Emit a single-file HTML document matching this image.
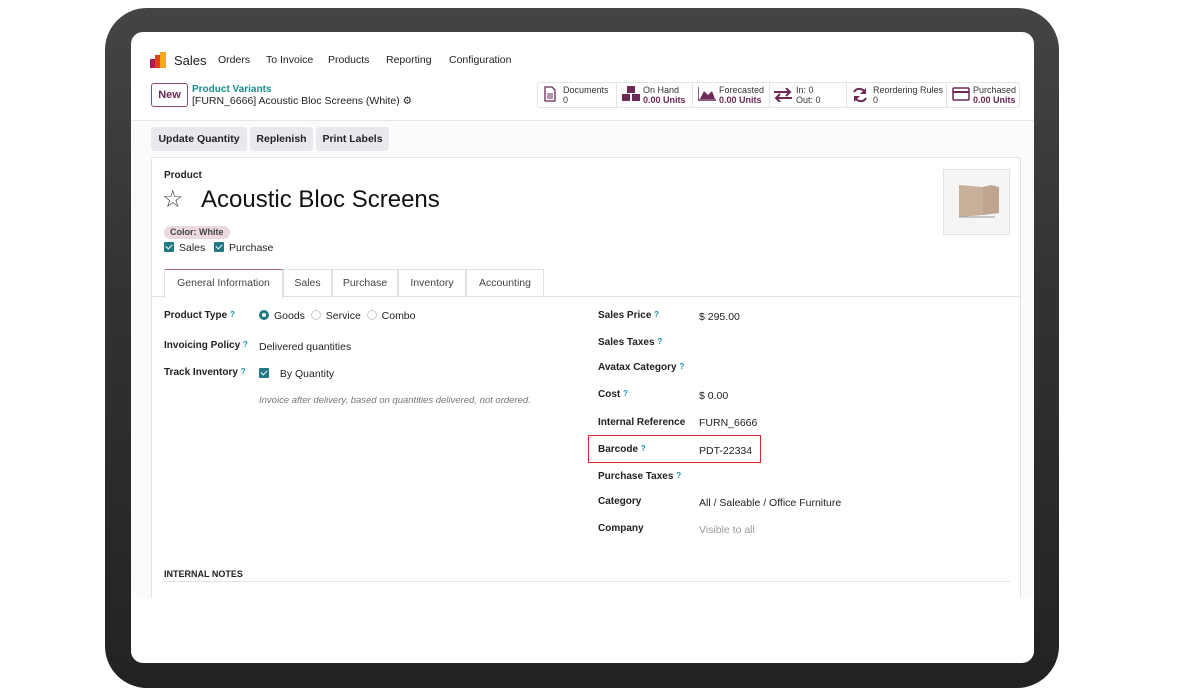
<!DOCTYPE html>
<html><head><meta charset="utf-8"><style>
*{margin:0;padding:0;box-sizing:border-box}
body{width:1200px;height:697px;background:#fff;position:relative;overflow:hidden;font-family:"Liberation Sans",sans-serif;color:#222;font-size:10.5px}
.a{position:absolute;white-space:nowrap}
.b{font-weight:bold}
.q{color:#1a8fb0;font-size:8px;vertical-align:top;font-weight:bold}
.lbl{font-weight:bold;font-size:10px}
.btn{position:absolute;top:127px;height:24px;background:#e7e9ed;border-radius:3px;font-weight:bold;font-size:10.5px;line-height:24px;text-align:center;color:#222;white-space:nowrap}
.stat{position:absolute;top:82px;height:26px;border-right:1px solid #e3e3e3;font-size:9px;line-height:10px;padding:3px 0 0 26px;color:#333;white-space:nowrap}
.stat b{color:#6c2a55}
.tab{position:absolute;top:269px;height:28px;border:1px solid #dee2e6;border-bottom:none;line-height:27px;text-align:center;font-size:10.5px;color:#444}
.cb{display:inline-block;width:10px;height:10px;background:#1f7a83;border-radius:1px;vertical-align:-1px;margin-right:5px;position:relative}
.cb:after{content:"";position:absolute;left:3px;top:1px;width:3px;height:5px;border:solid #fff;border-width:0 1.3px 1.3px 0;transform:rotate(45deg)}
.rad{display:inline-block;width:10px;height:10px;border:1px solid #ccc;border-radius:50%;vertical-align:-1px;margin-right:5px}
</style></head><body>
<div class="a" style="left:105px;top:8px;width:954px;height:680px;border-radius:42px;background:linear-gradient(#444 0%,#333 40%,#222 100%)"></div>
<div class="a" style="left:131px;top:32px;width:903px;height:631px;border-radius:12px;background:#fff"></div>
<div class="a" style="left:131px;top:120px;width:903px;height:478px;background:#fbfbfc"></div>
<div class="a" style="left:131px;top:120px;width:903px;height:1px;background:#e5e5e5"></div>
<svg class="a" style="left:150px;top:52px" width="17" height="16"><rect x="0" y="7" width="5" height="9" fill="#b0195a"/><rect x="5" y="3" width="5" height="13" fill="#e0401c"/><rect x="10" y="0" width="6" height="16" fill="#f5a623"/></svg>
<div class="a" style="left:174px;top:53px;font-size:13px">Sales</div>
<div class="a" style="left:218px;top:54px">Orders</div>
<div class="a" style="left:266px;top:54px">To Invoice</div>
<div class="a" style="left:328px;top:54px">Products</div>
<div class="a" style="left:386px;top:54px">Reporting</div>
<div class="a" style="left:449px;top:54px">Configuration</div>
<div class="a" style="left:151px;top:83px;width:37px;height:24px;border:1px solid #8a4a72;border-radius:3px;color:#6c2a55;font-weight:bold;text-align:center;line-height:22px;font-size:11px">New</div>
<div class="a b" style="left:192px;top:84px;color:#1a8c8c;font-size:10px">Product Variants</div>
<div class="a" style="left:192px;top:95px;font-size:10.5px">[FURN_6666] Acoustic Bloc Screens (White) ⚙</div>
<div class="a" style="left:537px;top:82px;width:483px;height:26px;border:1px solid #e3e3e3;border-radius:3px"></div>
<div class="stat" style="left:537px;width:80px">Documents<br>0<svg class="a" style="left:7px;top:4px" width="12" height="16"><path d="M1 1h7l3 3v11H1z" fill="none" stroke="#6c2a55" stroke-width="1.3"/><path d="M3 8h6M3 10h6M3 12h6" stroke="#6c2a55"/></svg></div>
<div class="stat" style="left:617px;width:76px">On Hand<br><b>0.00 Units</b><svg class="a" style="left:5px;top:4px" width="20" height="16"><g fill="#6c2a55"><rect x="5" y="0" width="8" height="7"/><rect x="0" y="8" width="8" height="7"/><rect x="10" y="8" width="8" height="7"/></g></svg></div>
<div class="stat" style="left:693px;width:77px">Forecasted<br><b>0.00 Units</b><svg class="a" style="left:5px;top:5px" width="18" height="14"><path d="M0 0v13h18" stroke="#6c2a55" fill="none" stroke-width="1.5"/><path d="M2 12l4-8 4 4 4-4 3 8z" fill="#6c2a55"/></svg></div>
<div class="stat" style="left:770px;width:77px">In: 0<br>Out: 0<svg class="a" style="left:4px;top:6px" width="18" height="14"><path d="M0 4h16M12 0l4 4-4 4M18 10H2M6 6l-4 4 4 4" stroke="#6c2a55" fill="none" stroke-width="2"/></svg></div>
<div class="stat" style="left:847px;width:100px">Reordering Rules<br>0<svg class="a" style="left:5px;top:5px" width="16" height="16"><path d="M13 6A6 6 0 0 0 2 5M3 10a6 6 0 0 0 11 1" stroke="#6c2a55" fill="none" stroke-width="2"/><path d="M14 1v6H8zM2 15V9h6z" fill="#6c2a55"/></svg></div>
<div class="stat" style="left:947px;width:73px;border:none">Purchased<br><b>0.00 Units</b><svg class="a" style="left:5px;top:5px" width="18" height="14"><rect x="1" y="1" width="16" height="12" rx="1" fill="none" stroke="#6c2a55" stroke-width="1.5"/><rect x="1" y="4" width="16" height="2" fill="#6c2a55"/></svg></div>
<div class="btn" style="left:151px;width:96px">Update Quantity</div>
<div class="btn" style="left:250px;width:63px">Replenish</div>
<div class="btn" style="left:316px;width:73px">Print Labels</div>
<div class="a" style="left:151px;top:157px;width:870px;height:441px;background:#fff;border:1px solid #e3e3e3;border-bottom:none;border-radius:3px 3px 0 0"></div>
<div class="a lbl" style="left:164px;top:170px">Product</div>
<div class="a" style="left:162px;top:185px;font-size:24px;color:#444">☆</div>
<div class="a" style="left:201px;top:186px;font-size:24px;color:#111">Acoustic Bloc Screens</div>
<div class="a" style="left:164px;top:226px;height:13px;padding:0 6px;background:#ebd9dd;border-radius:7px;font-size:9px;line-height:13px;font-weight:bold;color:#444">Color: White</div>
<div class="a" style="left:164px;top:242px"><span class="cb"></span>Sales&nbsp;&nbsp;&nbsp;<span class="cb"></span>Purchase</div>
<div class="a" style="left:943px;top:169px;width:67px;height:66px;border:1px solid #e3e3e3;background:#f6f5f5"></div>
<svg class="a" style="left:955px;top:181px" width="45" height="44"><path d="M4 4l24 2v28L4 36z" fill="#c9b09a"/><path d="M28 6l8-2 8 2v26l-16 2z" fill="#bfa58f"/><path d="M4 36h36" stroke="#999"/></svg>
<div class="a" style="left:152px;top:296px;width:868px;height:1px;background:#dee2e6"></div>
<div class="tab" style="left:164px;width:119px;border-top:1px solid #a66b8e;background:#fff;height:29px">General Information</div>
<div class="tab" style="left:283px;width:49px">Sales</div>
<div class="tab" style="left:332px;width:66px">Purchase</div>
<div class="tab" style="left:398px;width:68px">Inventory</div>
<div class="tab" style="left:466px;width:78px">Accounting</div>
<div class="a lbl" style="left:164px;top:310px">Product Type <span class="q">?</span></div>
<div class="a" style="left:259px;top:310px"><span class="rad" style="border:3px solid #1f7a83"></span>Goods&nbsp;&nbsp;<span class="rad"></span>Service&nbsp;&nbsp;<span class="rad"></span>Combo</div>
<div class="a lbl" style="left:164px;top:340px">Invoicing Policy <span class="q">?</span></div>
<div class="a" style="left:259px;top:341px">Delivered quantities</div>
<div class="a lbl" style="left:164px;top:367px">Track Inventory <span class="q">?</span></div>
<div class="a" style="left:259px;top:368px"><span class="cb"></span>&nbsp;&nbsp;By Quantity</div>
<div class="a" style="left:259px;top:395px;font-style:italic;color:#777;font-size:9.5px">Invoice after delivery, based on quantities delivered, not ordered.</div>
<div class="a lbl" style="left:598px;top:310px">Sales Price <span class="q">?</span></div><div class="a" style="left:699px;top:311px">$ 295.00</div>
<div class="a lbl" style="left:598px;top:337px">Sales Taxes <span class="q">?</span></div>
<div class="a lbl" style="left:598px;top:362px">Avatax Category <span class="q">?</span></div>
<div class="a lbl" style="left:598px;top:389px">Cost <span class="q">?</span></div><div class="a" style="left:699px;top:390px">$ 0.00</div>
<div class="a lbl" style="left:598px;top:417px">Internal Reference</div><div class="a" style="left:699px;top:417px">FURN_6666</div>
<div class="a" style="left:588px;top:435px;width:173px;height:28px;border:1.5px solid #e0262f"></div>
<div class="a lbl" style="left:598px;top:444px">Barcode <span class="q">?</span></div><div class="a" style="left:699px;top:445px">PDT-22334</div>
<div class="a lbl" style="left:598px;top:471px">Purchase Taxes <span class="q">?</span></div>
<div class="a lbl" style="left:598px;top:496px">Category</div><div class="a" style="left:699px;top:497px">All / Saleable / Office Furniture</div>
<div class="a lbl" style="left:598px;top:523px">Company</div><div class="a" style="left:699px;top:524px;color:#999">Visible to all</div>
<div class="a b" style="left:164px;top:569px;font-size:9px">INTERNAL NOTES</div>
<div class="a" style="left:164px;top:581px;width:846px;height:1px;background:#e5e5e5"></div>
<div class="a" style="left:131px;top:598px;width:903px;height:64px;background:#fff;border-radius:0 0 12px 12px"></div>
</body></html>
